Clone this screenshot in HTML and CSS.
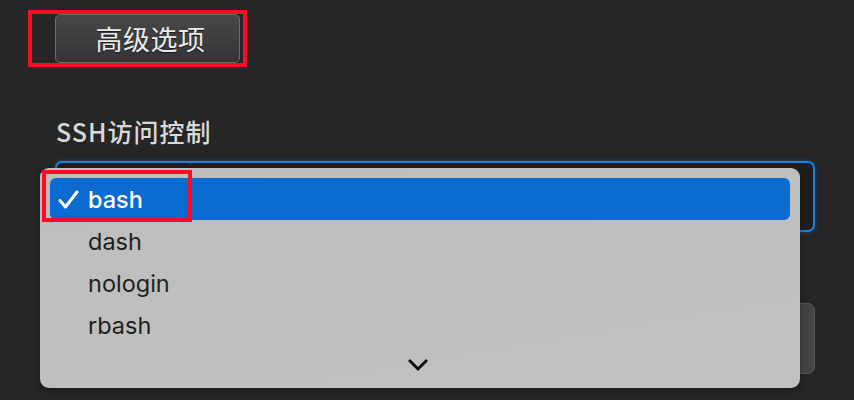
FILE: index.html
```html
<!DOCTYPE html>
<html lang="zh-CN">
<head>
<meta charset="utf-8">
<title>SSH访问控制</title>
<link rel="stylesheet" href="styles.css">
</head>
<body>
<div class="page">
  <div class="mark mark-adv">
    <button class="adv-btn">高级选项</button>
  </div>
  <div class="field-label">SSH访问控制</div>
  <div class="select-box"></div>
  <div class="lower-btn"></div>

  <div class="menu">
    <div class="item selected">
      <svg class="check" width="22" height="20" viewBox="0 0 22 20"><path d="M2 10.5 L7.5 17 L19 2" fill="none" stroke="#fff" stroke-width="3" stroke-linecap="round" stroke-linejoin="round"/></svg>
      <span>bash</span>
    </div>
    <div class="item"><span>dash</span></div>
    <div class="item"><span>nologin</span></div>
    <div class="item"><span>rbash</span></div>
    <div class="more">
      <svg width="20" height="14" viewBox="0 0 20 14"><path d="M2 3 L10 11 L18 3" fill="none" stroke="#111" stroke-width="3" stroke-linecap="square"/></svg>
    </div>
  </div>
  <div class="mark mark-bash"></div>
</div>
</body>
</html>
```
FILE: styles.css
```css
html, body {
  margin: 0;
  padding: 0;
  background: #262626;
}
.page {
  position: relative;
  width: 854px;
  height: 400px;
  overflow: hidden;
  font-family: "Noto Sans CJK SC", "Noto Sans", sans-serif;
}
.mark {
  border: 4px solid #ff0a25;
  box-sizing: border-box;
}
.mark-adv {
  margin: 10px 0 0 28px;
  width: 219px;
  height: 57px;
  padding-left: 23px;
  display: flex;
}
.adv-btn {
  width: 185px;
  height: 49px;
  box-sizing: border-box;
  border: 1px solid #6c6c6c;
  border-radius: 5px;
  background: linear-gradient(#474747, #353535);
  color: #ebebeb;
  font-family: "Noto Sans CJK SC", sans-serif;
  font-size: 27px;
  letter-spacing: 0.5px;
  padding: 0 0 0 6px;
  text-shadow: 0 1px 1px rgba(0,0,0,0.6);
  display: flex;
  align-items: center;
  justify-content: center;
}
.field-label {
  margin: 49px 0 0 56px;
  color: #d9d9d9;
  font-size: 25px;
  font-weight: 500;
  line-height: 30px;
  height: 30px;
  letter-spacing: 1px;
}
.select-box {
  margin: 15px 0 0 55px;
  width: 760px;
  height: 71px;
  box-sizing: border-box;
  border: 2px solid #1581e0;
  border-radius: 7px;
  background: #1f1f1f;
  box-shadow: 0 0 4px rgba(21,129,224,0.45);
}
.lower-btn {
  margin: 71px 0 0 55px;
  width: 760px;
  height: 71px;
  box-sizing: border-box;
  border: 1px solid #575757;
  border-radius: 7px;
  background: #444444;
}
.menu {
  position: absolute;
  left: 40px;
  top: 168px;
  width: 760px;
  height: 220px;
  box-sizing: border-box;
  padding: 10px 10px 0;
  border-radius: 9px;
  background: linear-gradient(170deg, #bcbdbc, #c1c1c0);
  box-shadow: 0 2px 6px rgba(0,0,0,0.35);
  font-family: Inter, "Noto Sans", sans-serif;
}
.item {
  height: 42px;
  display: flex;
  align-items: center;
  padding-left: 38px;
  color: #1e1e1e;
  font-size: 23.5px;
  position: relative;
}
.item.selected {
  background: #0b6bd0;
  border-radius: 6px;
  color: #fff;
  font-weight: 500;
}
.check {
  position: absolute;
  left: 8px;
  top: 12px;
}
.more {
  display: flex;
  justify-content: center;
  padding-top: 12px;
  padding-right: 4px;
}
.mark-bash {
  position: absolute;
  left: 42px;
  top: 170px;
  width: 150px;
  height: 52px;
}
```
